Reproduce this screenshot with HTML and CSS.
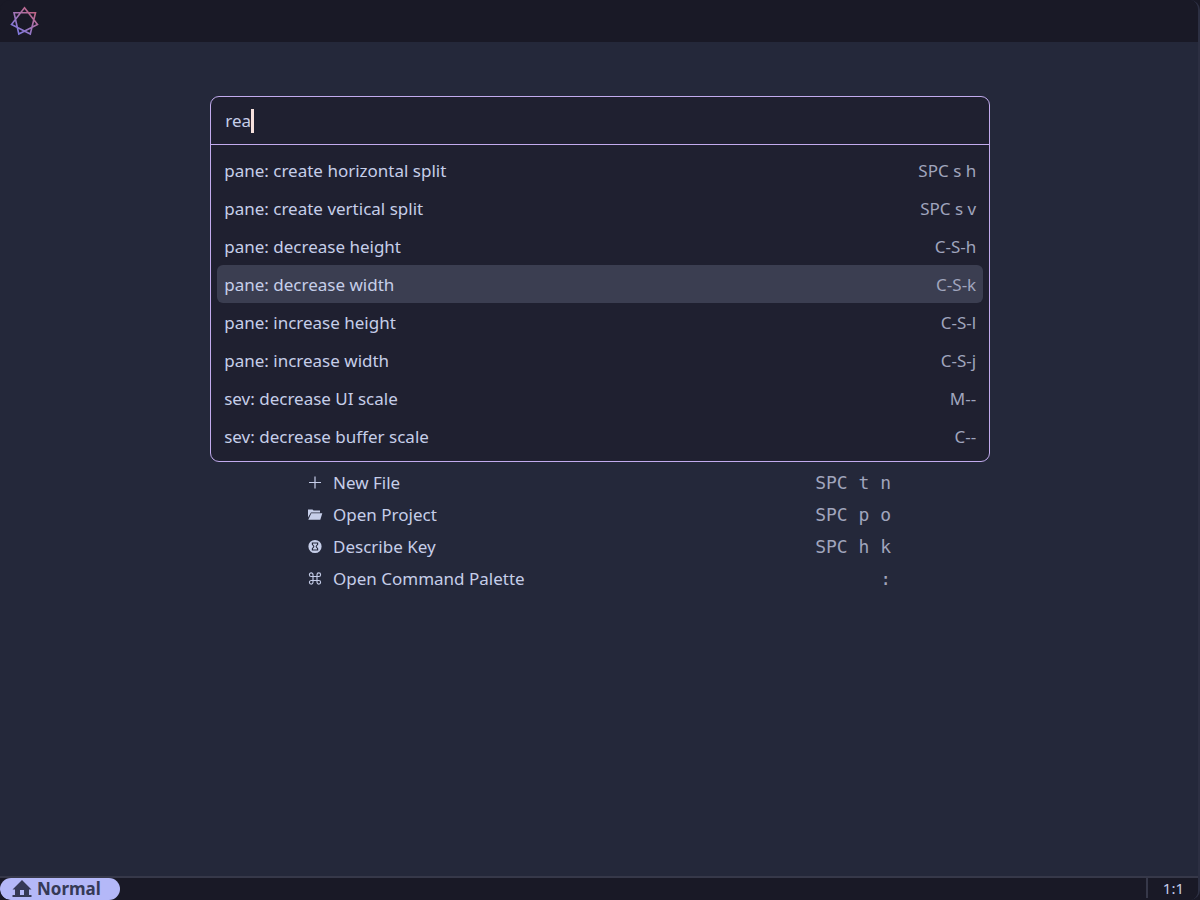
FILE: index.html
```html
<!DOCTYPE html>
<html lang="en">
<head>
    <meta charset="UTF-8">
    <title>sev</title>
    <link rel="stylesheet" href="styles.css">
</head>
<body>
<div class="window">
    <header class="titlebar">
        <svg class="logo" viewBox="0 0 30 30" aria-hidden="true">
            <defs>
                <linearGradient id="star" gradientUnits="userSpaceOnUse" x1="5" y1="24" x2="22" y2="4">
                    <stop offset="0" stop-color="#7f78dc"/>
                    <stop offset="0.5" stop-color="#a374b4"/>
                    <stop offset="1" stop-color="#c06484"/>
                </linearGradient>
            </defs>
            <path d="M14.500 1.700 27.500 18.400 8.800 28 4 6.700H25.500L20.300 28 1.500 18.400Z" fill="none" stroke="url(#star)" stroke-width="1.600"/>
        </svg>
    </header>

    <main class="editor">
        <div class="welcome">
            <button class="action">
                <svg class="icon" viewBox="0 0 14 14"><path d="M7 .5v12M1 6.500h12" fill="none" stroke="currentColor" stroke-width="1.2"/></svg>
                <span class="label">New File</span>
                <kbd>SPC t n</kbd>
            </button>
            <button class="action">
                <svg class="icon" viewBox="0 0 14 14"><path d="M0 1.500h4.500l1 1H12V4.500H3L0 9.500ZM3.300 5.300H14.300l-2 6.400H.3Z" fill="currentColor"/></svg>
                <span class="label">Open Project</span>
                <kbd>SPC p o</kbd>
            </button>
            <button class="action">
                <svg class="icon" viewBox="0 0 14 14"><path fill-rule="evenodd" d="M7-.1a6.600 6.600 0 1 1 0 13.200A6.600 6.600 0 0 1 7-.1ZM3.800 2.500v2L5.400 6.500 3.800 8.500v2h6.400V8.500L8.600 6.500l1.600-2V2.500Z" fill="currentColor"/><path d="M5 3.500h4v1L7.700 6v1L9 8.500v1H5V8.500L6.300 7V6L5 4.500Z" fill="currentColor"/></svg>
                <span class="label">Describe Key</span>
                <kbd>SPC h k</kbd>
            </button>
            <button class="action">
                <svg class="icon" viewBox="0 0 14 14"><path d="M5 4.500V2.700A1.800 1.800 0 1 0 3.200 4.500H10.800A1.800 1.800 0 1 0 9 2.700V10.300A1.800 1.800 0 1 0 10.800 8.500H3.200A1.800 1.800 0 1 0 5 10.300Z" fill="none" stroke="currentColor" stroke-width="1.1"/></svg>
                <span class="label">Open Command Palette</span>
                <kbd>:</kbd>
            </button>
        </div>

        <div class="palette">
            <div class="query">
                <input type="text" value="rea" aria-label="Command" spellcheck="false">
                <span class="cursor"></span>
            </div>
            <div class="results">
                <button class="item"><span>pane: create horizontal split</span><kbd>SPC s h</kbd></button>
                <button class="item"><span>pane: create vertical split</span><kbd>SPC s v</kbd></button>
                <button class="item"><span>pane: decrease height</span><kbd>C-S-h</kbd></button>
                <button class="item active"><span>pane: decrease width</span><kbd>C-S-k</kbd></button>
                <button class="item"><span>pane: increase height</span><kbd>C-S-l</kbd></button>
                <button class="item"><span>pane: increase width</span><kbd>C-S-j</kbd></button>
                <button class="item"><span>sev: decrease UI scale</span><kbd>M--</kbd></button>
                <button class="item"><span>sev: decrease buffer scale</span><kbd>C--</kbd></button>
            </div>
        </div>
    </main>

    <footer class="statusbar">
        <div class="mode">
            <svg class="home" viewBox="0 0 20 18" aria-hidden="true"><path d="M10 0 19.500 9.500H17V15H19.500V17H.5V15H3V9.500H.5ZM8 10v5h4v-5Z" fill="currentColor" fill-rule="evenodd"/></svg>
            <span>Normal</span>
        </div>
        <div class="position">1:1</div>
    </footer>
</div>
</body>
</html>
```

FILE: styles.css
```css
* {
    box-sizing: border-box;
}

body {
    margin: 0;
    background: #191926;
    color: #c6cee9;
    font-family: "Noto Sans", sans-serif;
    font-size: 17px;
    line-height: 24px;
}

button, input {
    margin: 0;
    padding: 0;
    border: 0;
    background: none;
    color: inherit;
    font: inherit;
}

kbd {
    color: #a0a5bd;
    font: inherit;
}

.window {
    display: flex;
    flex-direction: column;
    min-height: 100vh;
    border-right: 2px solid #2c2f42;
    border-radius: 10px;
    overflow: hidden;
}

.titlebar {
    display: flex;
    align-items: center;
    height: 42px;
    padding: 0 10px;
    background: #191926;
}

.logo {
    width: 30px;
    height: 30px;
}

.editor {
    position: relative;
    flex: 1;
    background: #24283a;
}

.welcome {
    width: 584px;
    margin: 0 auto;
    padding-top: 425px;
}

.action {
    display: flex;
    align-items: center;
    width: 100%;
    height: 32px;
    padding-left: 1px;
    text-align: left;
    cursor: pointer;
}

.action .icon {
    width: 14px;
    height: 14px;
    margin-right: 11px;
    overflow: visible;
}

.action .label {
    flex: 1;
}

.action kbd {
    font-family: "DejaVu Sans Mono", monospace;
    font-size: 18px;
}

.palette {
    position: absolute;
    top: 54px;
    left: 50%;
    width: 65vw;
    margin-left: -32.4vw;
    background: #1f2030;
    border: 1px solid #c2abee;
    border-radius: 9px;
}

.query {
    display: flex;
    align-items: center;
    height: 48px;
    padding: 0 14px;
    border-bottom: 1px solid #c2abee;
}

.query input {
    field-sizing: content;
    outline: none;
}

.cursor {
    width: 3px;
    height: 24px;
    background: #f5e0dc;
}

.results {
    padding: 6px;
}

.item {
    display: flex;
    justify-content: space-between;
    align-items: center;
    width: 100%;
    height: 38px;
    padding: 2px 7px 0;
    border-radius: 6px;
    cursor: pointer;
}

.item.active {
    background: #3b3e51;
}

.statusbar {
    display: flex;
    justify-content: space-between;
    height: 24px;
    border-top: 2px solid #363849;
    background: #191926;
}

.mode {
    display: flex;
    align-items: center;
    gap: 5px;
    padding: 0 19px 0 12px;
    border-radius: 11px;
    background: #b4b8f8;
    color: #363a56;
    font-weight: bold;
}

.home {
    width: 20px;
    height: 18px;
}

.position {
    display: flex;
    align-items: center;
    margin-bottom: 2px;
    padding: 0 14px 0 15px;
    border-left: 2px solid #363849;
    font-size: 15px;
}
```
